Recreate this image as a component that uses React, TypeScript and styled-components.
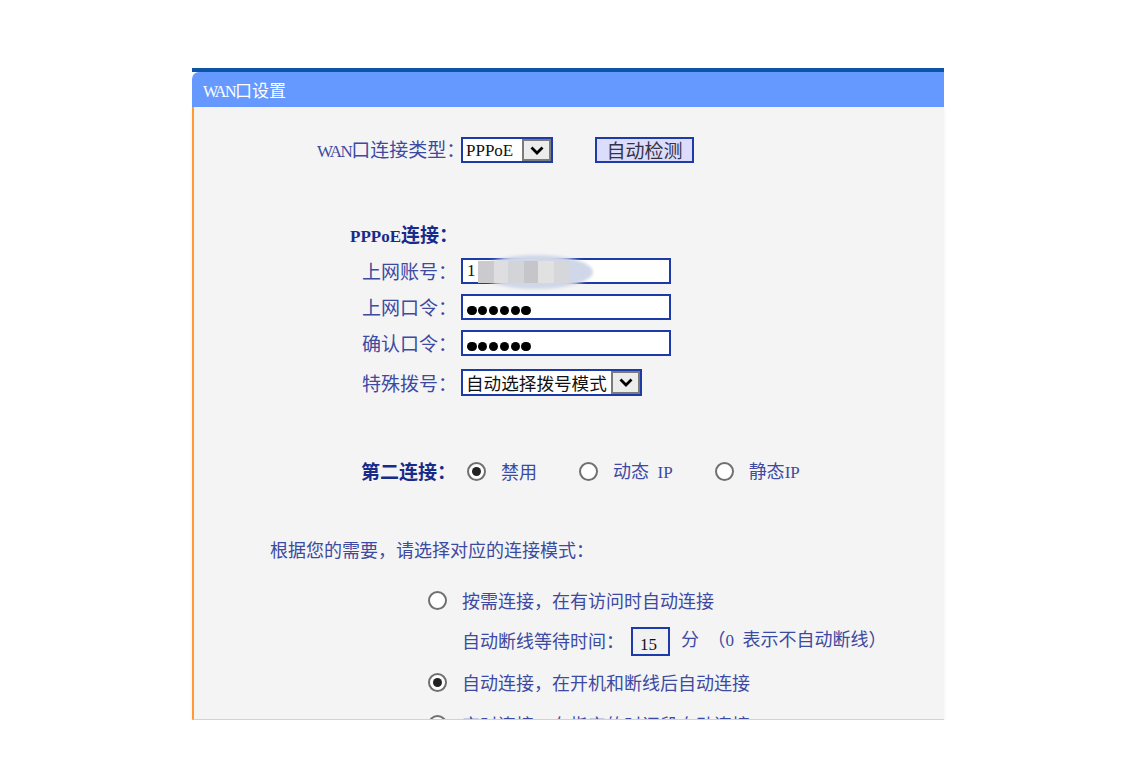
import React from "react";
import styled, { createGlobalStyle } from "styled-components";

const GlobalStyle = createGlobalStyle`
  html, body { margin: 0; padding: 0; background: #ffffff; }
  body { font-family: "Noto Sans CJK SC", "Liberation Sans", sans-serif; }
`;

const Page = styled.div`
  padding: 68px 0 0 192px;
`;

const Panel = styled.section`
  width: 752px;
  background: #ffffff;
`;

const TopStripe = styled.div`
  height: 4px;
  background: #0a55a6;
`;

const Header = styled.h1`
  margin: 0;
  height: 35px;
  line-height: 35px;
  padding-left: 11px;
  background: #6699ff;
  border-top-left-radius: 7px;
  color: #ffffff;
  font-size: 17px;
  font-weight: 400;
`;

const Body = styled.div`
  box-sizing: border-box;
  height: 613px;
  background: #f4f4f4;
  border-left: 2px solid #ff9a30;
  border-bottom: 1px solid #d2d2d2;
  box-shadow: 0 2px 3px rgba(0, 0, 0, 0.08);
  overflow: hidden;
  padding-top: 30px;
  display: flex;
  flex-direction: column;
  color: #3c4aa2;
`;

const Latin = styled.span<{ $size?: number; $bold?: boolean; $tight?: boolean }>`
  font-family: "Liberation Serif", "Times New Roman", serif;
  font-size: ${(p) => p.$size ?? 16}px;
  font-weight: ${(p) => (p.$bold ? 700 : 400)};
  letter-spacing: ${(p) => (p.$tight ? "-1.5px" : "0")};
`;

const Row = styled.div<{ $indent: number; $top?: number; $height?: number }>`
  display: flex;
  align-items: center;
  flex-shrink: 0;
  padding-left: ${(p) => p.$indent}px;
  margin-top: ${(p) => p.$top ?? 0}px;
  height: ${(p) => p.$height ?? 26}px;
`;

const Label = styled.label<{ $width: number }>`
  width: ${(p) => p.$width}px;
  flex-shrink: 0;
  font-size: 19px;
  line-height: 24px;
  white-space: nowrap;
`;

const Heading = styled.div<{ $width?: number }>`
  ${(p) => (p.$width ? `width: ${p.$width}px;` : "")}
  flex-shrink: 0;
  font-size: 19px;
  line-height: 24px;
  font-weight: 700;
  color: #172b8a;
  white-space: nowrap;
`;

const SelectBox = styled.div<{ $width: number; $height?: number }>`
  box-sizing: border-box;
  width: ${(p) => p.$width}px;
  height: ${(p) => p.$height ?? 26}px;
  border: 2px solid #1d3ba8;
  background: #ffffff;
  display: flex;
  align-items: center;
  color: #111111;
`;

const SelectText = styled.span`
  flex: 1;
  min-width: 0;
  padding-left: 3px;
  font-size: 17.6px;
  line-height: 22px;
  white-space: nowrap;
`;

const ArrowBox = styled.span`
  box-sizing: border-box;
  width: 29px;
  flex-shrink: 0;
  align-self: stretch;
  border: 2px solid #7b7b7b;
  background: #ececec;
  display: flex;
  align-items: center;
  justify-content: center;
`;

const DetectButton = styled.button`
  margin-left: 42px;
  box-sizing: border-box;
  width: 99px;
  height: 26px;
  padding: 0;
  border: 2px solid #1d3ba8;
  background: #dcdcfd;
  color: #333344;
  font-family: inherit;
  font-size: 19px;
  line-height: 20px;
`;

const TextField = styled.div`
  position: relative;
  box-sizing: border-box;
  width: 210px;
  height: 26px;
  border: 2px solid #1d3ba8;
  background: #ffffff;
  display: flex;
  align-items: center;
  padding-left: 4px;
  color: #111111;
`;

const DotField = styled(TextField)`
  align-items: flex-end;
  padding-bottom: 3px;
  gap: 1.4px;
`;

const Dot = styled.span`
  width: 9.5px;
  height: 9.5px;
  border-radius: 50%;
  background: #000000;
`;

const Mosaic = styled.svg`
  position: absolute;
  left: 9px;
  top: -9px;
  pointer-events: none;
`;

const Radio = styled.span<{ $checked?: boolean }>`
  box-sizing: border-box;
  width: 19px;
  height: 19px;
  flex-shrink: 0;
  border: 2px solid #707070;
  border-radius: 50%;
  background: #ffffff;
  display: inline-flex;
  align-items: center;
  justify-content: center;
  &::after {
    content: "";
    width: 9px;
    height: 9px;
    border-radius: 50%;
    background: #222222;
    display: ${(p) => (p.$checked ? "block" : "none")};
  }
`;

const RadioGroup = styled.div`
  display: flex;
  align-items: center;
  gap: 42px;
`;

const Option = styled.div`
  display: inline-flex;
  align-items: center;
  gap: 15px;
  font-size: 18px;
  line-height: 24px;
  white-space: nowrap;
`;

const Text = styled.span`
  font-size: 18px;
  line-height: 24px;
  white-space: nowrap;
`;

const SubLabel = styled(Text)`
  padding-bottom: 4px;
  margin-right: 7px;
`;

const DelayInput = styled.div`
  box-sizing: border-box;
  width: 39px;
  height: 29px;
  border: 2px solid #1d3ba8;
  background: #f1f1f1;
  color: #111111;
  padding: 4px 0 0 7px;
  line-height: 20px;
  margin-right: 11px;
`;

const Chevron = () => (
  <svg width="14" height="9" viewBox="0 0 14 9">
    <polyline points="1.5,1.5 7,7 12.5,1.5" fill="none" stroke="#000" strokeWidth="2.8" />
  </svg>
);

const Dots = () => (
  <DotField>
    {Array.from({ length: 6 }).map((_, i) => (
      <Dot key={i} />
    ))}
  </DotField>
);

export default function App() {
  return (
    <>
      <GlobalStyle />
      <Page>
        <Panel>
          <TopStripe />
          <Header>
            <Latin $size={16} $tight>WAN</Latin>口设置
          </Header>
          <Body>
            <Row $indent={123}>
              <Label $width={144}>
                <Latin $size={17} $tight>WAN</Latin>口连接类型：
              </Label>
              <SelectBox $width={92}>
                <SelectText>
                  <Latin $size={17}>PPPoE</Latin>
                </SelectText>
                <ArrowBox>
                  <Chevron />
                </ArrowBox>
              </SelectBox>
              <DetectButton>自动检测</DetectButton>
            </Row>

            <Row $indent={156} $top={60} $height={24}>
              <Heading>
                <Latin $size={17} $bold>PPPoE</Latin>连接：
              </Heading>
            </Row>

            <Row $indent={168} $top={11}>
              <Label $width={99}>上网账号：</Label>
              <TextField>
                <Latin $size={17}>1</Latin>
                <Mosaic width="128" height="42" viewBox="0 0 128 42">
                  <defs>
                    <filter id="soft" x="-20%" y="-40%" width="140%" height="180%">
                      <feGaussianBlur stdDeviation="1.6" />
                    </filter>
                  </defs>
                  <ellipse cx="64" cy="21" rx="57" ry="17" fill="#d0d7e8" filter="url(#soft)" />
                  <rect x="6" y="10" width="16" height="22" fill="#cbcbcf" />
                  <rect x="22" y="10" width="14" height="22" fill="#dedee1" />
                  <rect x="36" y="10" width="16" height="22" fill="#d3d4d8" />
                  <rect x="52" y="10" width="14" height="22" fill="#c6c6ca" />
                  <rect x="66" y="10" width="16" height="22" fill="#e1e1e1" />
                  <rect x="82" y="10" width="16" height="22" fill="#d5d7db" />
                </Mosaic>
              </TextField>
            </Row>

            <Row $indent={168} $top={10}>
              <Label $width={99}>上网口令：</Label>
              <Dots />
            </Row>

            <Row $indent={168} $top={10}>
              <Label $width={99}>确认口令：</Label>
              <Dots />
            </Row>

            <Row $indent={168} $top={13} $height={27}>
              <Label $width={99}>特殊拨号：</Label>
              <SelectBox $width={181} $height={27}>
                <SelectText>自动选择拨号模式</SelectText>
                <ArrowBox>
                  <Chevron />
                </ArrowBox>
              </SelectBox>
            </Row>

            <Row $indent={167} $top={63} $height={24}>
              <Heading $width={106}>第二连接：</Heading>
              <RadioGroup>
                <Option>
                  <Radio $checked />
                  <span>禁用</span>
                </Option>
                <Option>
                  <Radio />
                  <span>
                    动态<Latin $size={17}>&nbsp; IP</Latin>
                  </span>
                </Option>
                <Option>
                  <Radio />
                  <span>
                    静态<Latin $size={17}>IP</Latin>
                  </span>
                </Option>
              </RadioGroup>
            </Row>

            <Row $indent={76} $top={54} $height={24}>
              <Text>根据您的需要，请选择对应的连接模式：</Text>
            </Row>

            <Row $indent={234} $top={27} $height={24}>
              <Option>
                <Radio />
                <span>按需连接，在有访问时自动连接</span>
              </Option>
            </Row>

            <Row $indent={268} $top={15} $height={29}>
              <SubLabel>自动断线等待时间：</SubLabel>
              <DelayInput>
                <Latin $size={17}>15</Latin>
              </DelayInput>
              <SubLabel>
                分<Latin $size={17}>&nbsp; </Latin>（<Latin $size={17}>0&nbsp; </Latin>表示不自动断线）
              </SubLabel>
            </Row>

            <Row $indent={234} $top={14} $height={24}>
              <Option>
                <Radio $checked />
                <span>自动连接，在开机和断线后自动连接</span>
              </Option>
            </Row>

            <Row $indent={234} $top={18} $height={24}>
              <Option>
                <Radio />
                <span>定时连接，在指定的时间段自动连接</span>
              </Option>
            </Row>
          </Body>
        </Panel>
      </Page>
    </>
  );
}
